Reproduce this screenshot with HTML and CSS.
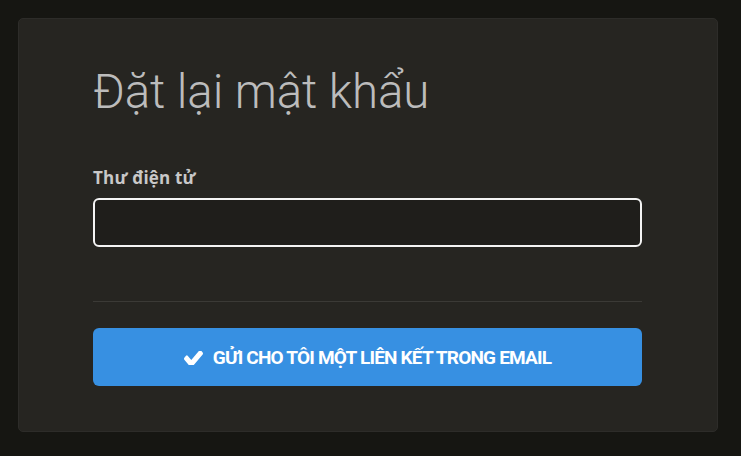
FILE: index.html
```html
<!DOCTYPE html>
<html lang="vi">
<head>
  <meta charset="UTF-8">
  <meta name="viewport" content="width=device-width, initial-scale=1.0">
  <title>Đặt lại mật khẩu</title>
  <link rel="stylesheet" href="styles.css">
</head>
<body>
  <div class="card">
    <h1 class="title">Đặt lại mật khẩu</h1>
    <form class="reset-form" onsubmit="event.preventDefault()">
      <label class="field-label" for="email">Thư điện tử</label>
      <input class="field-input" type="email" id="email" name="email">
      <hr class="divider">
      <button class="send-btn" type="submit">
        <svg class="send-icon" viewBox="121 398 1550 960" width="19" height="14" preserveAspectRatio="none" aria-hidden="true">
          <path fill="currentColor" d="M1671 566q0 40-28 68l-724 724-136 136q-28 28-68 28t-68-28l-136-136-362-362q-28-28-28-68t28-68l136-136q28-28 68-28t68 28l294 295 656-657q28-28 68-28t68 28l136 136q28 28 28 68z"/>
        </svg>
        <span class="send-text">Gửi cho tôi một liên kết trong email</span>
      </button>
    </form>
  </div>
</body>
</html>
```
FILE: styles.css
```css
body {
  margin: 0;
  padding: 18px;
  background-color: #161612;
  font-family: 'Open Sans', 'Liberation Sans', sans-serif;
}

.card {
  width: 700px;
  height: 414px;
  box-sizing: border-box;
  padding: 45px 75px 0 74px;
  background-color: #262521;
  border: 1px solid #2d2c29;
  border-radius: 5px;
}

.title {
  margin: 0;
  font-family: Roboto, 'Liberation Sans', sans-serif;
  font-weight: 300;
  font-size: 47.5px;
  line-height: 56px;
  letter-spacing: -0.1px;
  color: #bcbcbc;
}

.reset-form {
  margin-top: 47px;
}

.field-label {
  display: block;
  font-size: 17px;
  font-weight: 700;
  line-height: 22px;
  letter-spacing: 0.2px;
  color: #c8c8c8;
}

.field-input {
  display: block;
  width: 100%;
  height: 49px;
  margin-top: 9px;
  box-sizing: border-box;
  background-color: #1f1e1b;
  border: 2px solid #f4f4f4;
  border-radius: 6px;
  color: #eee;
  font-size: 15px;
  padding: 0 12px;
  outline: none;
}

.divider {
  margin: 54px 0 0;
  border: none;
  border-top: 1px solid #3b3a36;
}

.send-btn {
  display: flex;
  align-items: center;
  justify-content: center;
  gap: 10px;
  width: 100%;
  height: 58px;
  margin-top: 26px;
  padding: 0;
  background-color: #3790e2;
  color: #fff;
  border: none;
  border-radius: 6px;
  cursor: pointer;
}

.send-icon {
  margin-top: 1px;
}

.send-text {
  font-family: Roboto, 'Liberation Sans', sans-serif;
  font-weight: 700;
  font-size: 19px;
  text-transform: uppercase;
  letter-spacing: -0.8px;
}
```
